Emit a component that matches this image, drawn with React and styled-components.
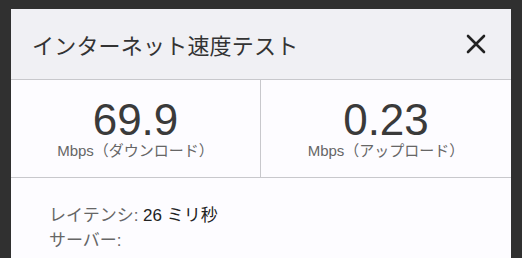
import React from "react";
import styled, { createGlobalStyle } from "styled-components";

const Global = createGlobalStyle`
  html, body { margin: 0; padding: 0; background: #303030; }
  body { font-family: "Liberation Sans", "Noto Sans CJK JP", sans-serif; }
`;

const Page = styled.div`
  padding: 9px 11px 0 11px;
  height: 258px;
  box-sizing: border-box;
  overflow: hidden;
`;

const Dialog = styled.div`
  width: 500px;
  background: #fdfcff;
  min-height: 260px;
`;

const Header = styled.div`
  height: 70px;
  display: flex;
  align-items: center;
  justify-content: space-between;
  padding: 0 24px 0 21px;
  background: #f0f0f4;
  border-bottom: 1px solid #c8c8cc;
`;

const Title = styled.h1`
  margin: 0;
  font-family: "Noto Sans CJK JP", sans-serif;
  font-weight: 400;
  font-size: 22px;
  color: #333;
  letter-spacing: 0.2px;
`;

const CloseButton = styled.button`
  border: 0;
  background: transparent;
  padding: 0;
  width: 22px;
  height: 22px;
  display: flex;
  align-items: center;
  justify-content: center;
  cursor: pointer;
`;

const Stats = styled.div`
  display: grid;
  grid-template-columns: 249px 1fr;
  border-bottom: 1px solid #c8c8cc;
`;

const Stat = styled.div`
  display: flex;
  flex-direction: column;
  align-items: center;
  padding: 18px 0 17px;
  border-left: ${(p) => (p.$divider ? "1px solid #c8c8cc" : "none")};
`;

const Value = styled.div`
  font-size: 44px;
  line-height: 44px;
  color: #3a3a3a;
`;

const Unit = styled.div`
  font-size: 15px;
  line-height: 18px;
  color: #666;
`;

const Body = styled.div`
  padding: 25px 38px;
`;

const Line = styled.div`
  font-size: 17px;
  line-height: 25px;
  color: #666;
`;

const Strong = styled.span`
  color: #222;
`;

function CloseIcon() {
  return (
    <svg width="20" height="20" viewBox="0 0 20 20">
      <path d="M2 2 L18 18 M18 2 L2 18" stroke="#222" strokeWidth="2.6" strokeLinecap="round" />
    </svg>
  );
}

export default function App() {
  return (
    <>
      <Global />
      <Page>
        <Dialog>
          <Header>
            <Title>インターネット速度テスト</Title>
            <CloseButton aria-label="閉じる">
              <CloseIcon />
            </CloseButton>
          </Header>
          <Stats>
            <Stat>
              <Value>69.9</Value>
              <Unit>Mbps（ダウンロード）</Unit>
            </Stat>
            <Stat $divider>
              <Value>0.23</Value>
              <Unit>Mbps（アップロード）</Unit>
            </Stat>
          </Stats>
          <Body>
            <Line>
              レイテンシ: <Strong>26 ミリ秒</Strong>
            </Line>
            <Line>サーバー:</Line>
          </Body>
        </Dialog>
      </Page>
    </>
  );
}
